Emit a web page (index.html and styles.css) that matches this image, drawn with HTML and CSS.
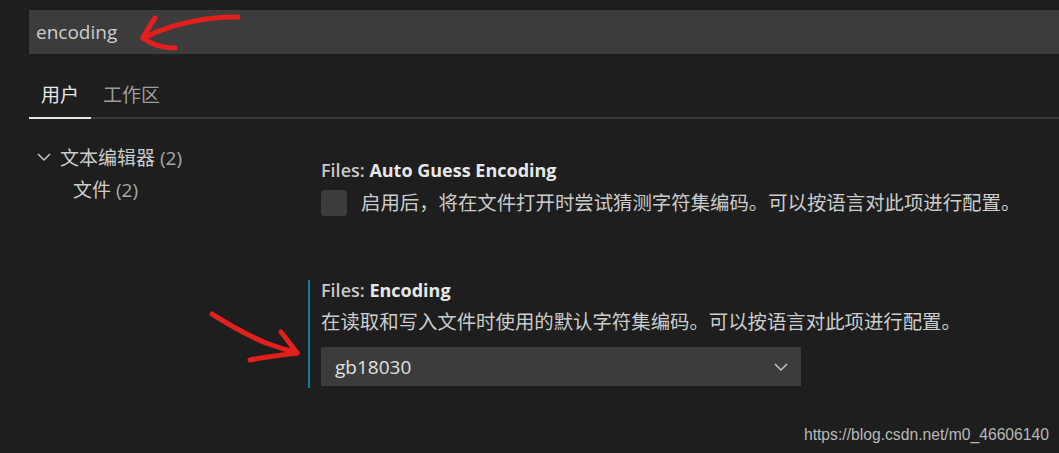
FILE: index.html
```html
<!DOCTYPE html>
<html lang="zh-CN">
<head>
    <meta charset="UTF-8">
    <meta name="viewport" content="width=device-width, initial-scale=1.0">
    <title>Settings</title>
    <link rel="stylesheet" href="styles.css">
</head>
<body>
    <div class="search">encoding</div>

    <div class="tabs">
        <div class="tab active">用户</div>
        <div class="tab">工作区</div>
    </div>

    <div class="editor">
        <div class="toc">
            <div class="toc-item">
                <svg class="chev" width="16" height="10" viewBox="0 0 16 10"><polyline points="2,2 8,8 14,2" fill="none" stroke="#c5c5c5" stroke-width="1.5"/></svg>
                <span>文本编辑器 <em>(2)</em></span>
            </div>
            <div class="toc-item child"><span>文件 <em>(2)</em></span></div>
        </div>

        <div class="settings">
            <div class="setting">
                <div class="title"><span class="cat">Files: </span>Auto Guess Encoding</div>
                <div class="bool-row">
                    <div class="checkbox"></div>
                    <div class="desc">启用后，将在文件打开时尝试猜测字符集编码。可以按语言对此项进行配置。</div>
                </div>
            </div>

            <div class="setting focused">
                <div class="title"><span class="cat">Files: </span>Encoding</div>
                <div class="desc">在读取和写入文件时使用的默认字符集编码。可以按语言对此项进行配置。</div>
                <div class="select">
                    <span>gb18030</span>
                    <svg width="16" height="10" viewBox="0 0 16 10"><polyline points="2,2 8,8 14,2" fill="none" stroke="#c5c5c5" stroke-width="1.5"/></svg>
                </div>
            </div>
        </div>
    </div>

    <!-- hand drawn marks on top of the screenshot -->
    <svg class="marks" width="1059" height="453" viewBox="0 0 1059 453">
        <g fill="none" stroke="#e3201d" stroke-width="5" stroke-linecap="round" stroke-linejoin="round">
            <path d="M238 17 C 205 17, 172 24, 143 38"/>
            <path d="M143 38 C 147 30, 151 24, 155 18"/>
            <path d="M143 38 C 152 45, 162 48, 175 48"/>
            <path d="M212 314 C 228 324, 242 333, 266 343 C 280 348, 290 351, 297 353"/>
            <path d="M297 353 C 291 345, 286 338, 281 332"/>
            <path d="M297 353 C 282 355, 265 357, 250 360"/>
        </g>
    </svg>

    <div class="watermark">https://blog.csdn.net/m0_46606140</div>
</body>
</html>
```

FILE: styles.css
```css
body {
    margin: 0;
    width: 1059px;
    height: 453px;
    overflow: hidden;
    position: relative;
    background-color: #1e1e1e;
    color: #cccccc;
    font-family: "Open Sans", "Noto Sans CJK SC", sans-serif;
    font-size: 19px;
}
.search {
    margin: 10px 0 0 29px;
    height: 44px;
    padding-left: 7px;
    display: flex;
    align-items: center;
    background: #3c3c3c;
    color: #cccccc;
}
.tabs {
    margin: 18px 0 0 29px;
    display: flex;
    border-bottom: 2px solid #3b3b3b;
}
.tab {
    padding: 10px 12px 9px;
    line-height: 26px;
    color: #9d9d9d;
}
.tab.active {
    color: #e7e7e7;
    border-bottom: 2px solid #e7e7e7;
    margin-bottom: -2px;
}
.editor {
    display: flex;
}
.toc {
    width: 308px;
    padding: 22px 0 0 29px;
    box-sizing: border-box;
}
.toc-item {
    height: 32px;
    display: flex;
    align-items: center;
    gap: 8px;
    padding-left: 7px;
    color: #cccccc;
}
.toc-item em {
    font-style: normal;
    color: #a8a8a8;
}
.toc-item.child {
    padding-left: 44px;
}
.settings {
    padding-top: 41px;
}
.setting {
    border-left: 2px solid transparent;
    padding: 0 0 2px 11px;
}
.setting.focused {
    margin-top: 62px;
    border-left-color: #137b9c;
}
.title {
    line-height: 20px;
    font-size: 18px;
    font-weight: 700;
    color: #e7e7e7;
}
.title .cat {
    font-weight: 600;
    color: #c8c8c8;
}
.bool-row {
    margin-top: 10px;
    display: flex;
    align-items: center;
    gap: 14px;
}
.checkbox {
    width: 26px;
    height: 26px;
    border-radius: 4px;
    background: #3c3c3c;
}
.desc {
    line-height: 22px;
    font-size: 19.4px;
    color: #cccccc;
}
.focused .desc {
    margin-top: 11px;
}
.select {
    margin-top: 14px;
    width: 480px;
    height: 39px;
    box-sizing: border-box;
    padding: 0 12px 0 14px;
    display: flex;
    align-items: center;
    justify-content: space-between;
    background: #3c3c3c;
    color: #e0e0e0;
}
.marks {
    position: absolute;
    left: 0;
    top: 0;
    pointer-events: none;
}
.watermark {
    position: absolute;
    right: 10px;
    bottom: 9px;
    font-family: "Liberation Sans", Arial, sans-serif;
    font-size: 15.7px;
    color: #b8b8b8;
}
```
